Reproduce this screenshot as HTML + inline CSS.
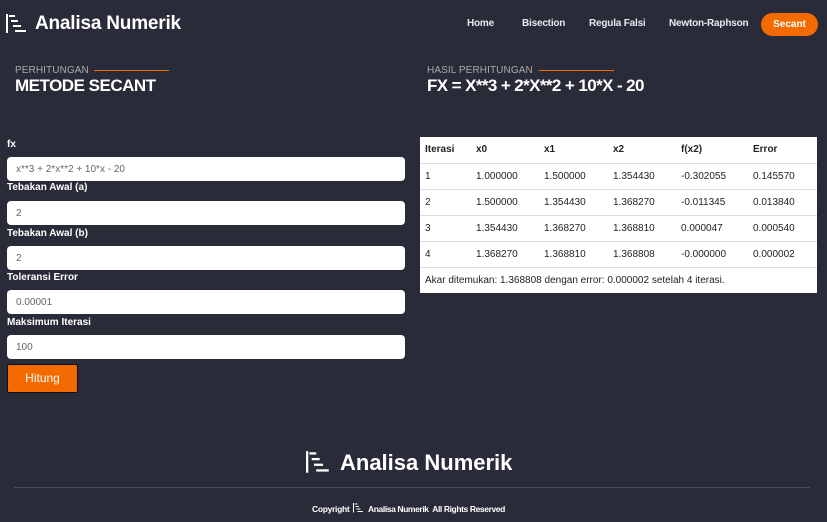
<!DOCTYPE html>
<html><head><meta charset="utf-8"><style>
*{margin:0;padding:0;box-sizing:border-box}
body{width:827px;height:522px;background:#2a2b38;font-family:"Liberation Sans",sans-serif;color:#fff;position:relative;overflow:hidden}
.a{position:absolute}
.brand{font-weight:bold;font-size:19px;letter-spacing:-0.2px}
.nav{font-size:10px;font-weight:bold;color:#e8e8ee;top:18px;letter-spacing:-0.2px}
.sec{left:761px;top:13px;width:57px;height:23px;border-radius:12px;background:#f26a00;color:#fff;font-size:10px;font-weight:bold;text-align:center;line-height:23px}
.small{font-size:10px;color:#aaa;letter-spacing:0.1px}
.line{height:1px;background:#f26a00}
.big{font-size:17px;font-weight:bold;letter-spacing:-0.5px}
.lbl{font-size:10px;font-weight:bold;left:7px}
.inp{left:7px;width:398px;height:24px;background:#fff;border-radius:4px;color:#666;font-size:10px;line-height:26px;padding-left:9px}
.btn{left:7px;top:364px;width:71px;height:29px;background:#f26a00;border:1px solid #111;border-radius:2px;font-size:12px;text-align:center;line-height:27px}
table{position:absolute;left:420px;top:137px;width:397px;background:#fff;border-collapse:collapse;color:#222;font-size:10px}
td{height:26px;border-bottom:1px solid #ddd;padding-left:5px}
th{height:26px;text-align:left;padding-left:5px;border-bottom:1px solid #ddd}
</style></head><body>
<svg class="a" style="left:6px;top:14px" width="22" height="20" viewBox="0 0 22 20"><g fill="#fff"><rect x="0" y="0" width="2" height="19"/><rect x="3" y="1" width="6" height="2"/><rect x="5" y="6" width="7" height="2"/><rect x="7" y="11" width="8" height="2"/><rect x="9" y="16" width="11" height="2"/></g></svg>
<div class="a brand" style="left:35px;top:13px">Analisa Numerik</div>
<div class="a nav" style="left:467px">Home</div>
<div class="a nav" style="left:522px">Bisection</div>
<div class="a nav" style="left:589px">Regula Falsi</div>
<div class="a nav" style="left:669px">Newton-Raphson</div>
<div class="a sec">Secant</div>
<div class="a small" style="left:15px;top:65px">PERHITUNGAN</div>
<div class="a line" style="left:94px;top:70px;width:75px"></div>
<div class="a big" style="left:15px;top:76px">METODE SECANT</div>
<div class="a small" style="left:427px;top:65px">HASIL PERHITUNGAN</div>
<div class="a line" style="left:539px;top:70px;width:75px"></div>
<div class="a big" style="left:427px;top:76px;letter-spacing:-0.6px">FX = X**3 + 2*X**2 + 10*X - 20</div>
<div class="a lbl" style="top:139px">fx</div>
<div class="a inp" style="top:157px">x**3 + 2*x**2 + 10*x - 20</div>
<div class="a lbl" style="top:182px">Tebakan Awal (a)</div>
<div class="a inp" style="top:201px">2</div>
<div class="a lbl" style="top:228px">Tebakan Awal (b)</div>
<div class="a inp" style="top:246px">2</div>
<div class="a lbl" style="top:272px">Toleransi Error</div>
<div class="a inp" style="top:290px">0.00001</div>
<div class="a lbl" style="top:317px">Maksimum Iterasi</div>
<div class="a inp" style="top:335px">100</div>
<div class="a btn">Hitung</div>
<table>
<tr><th style="width:51px">Iterasi</th><th style="width:68px">x0</th><th style="width:69px">x1</th><th style="width:68px">x2</th><th style="width:72px">f(x2)</th><th>Error</th></tr>
<tr><td>1</td><td>1.000000</td><td>1.500000</td><td>1.354430</td><td>-0.302055</td><td>0.145570</td></tr>
<tr><td>2</td><td>1.500000</td><td>1.354430</td><td>1.368270</td><td>-0.011345</td><td>0.013840</td></tr>
<tr><td>3</td><td>1.354430</td><td>1.368270</td><td>1.368810</td><td>0.000047</td><td>0.000540</td></tr>
<tr><td>4</td><td>1.368270</td><td>1.368810</td><td>1.368808</td><td>-0.000000</td><td>0.000002</td></tr>
<tr><td colspan="6" style="border:none">Akar ditemukan: 1.368808 dengan error: 0.000002 setelah 4 iterasi.</td></tr>
</table>
<svg class="a" style="left:306px;top:451px" width="25" height="23" viewBox="0 0 22 20"><g fill="#fff"><rect x="0" y="0" width="2" height="19"/><rect x="3" y="1" width="6" height="2"/><rect x="5" y="6" width="7" height="2"/><rect x="7" y="11" width="8" height="2"/><rect x="9" y="16" width="11" height="2"/></g></svg>
<div class="a brand" style="left:340px;top:450px;font-size:22px;letter-spacing:0">Analisa Numerik</div>
<div class="a" style="left:14px;top:487px;width:796px;height:1px;background:#4a4b58"></div>
<div class="a" style="left:312px;top:504px;font-size:8.5px;font-weight:bold;letter-spacing:-0.3px">Copyright</div>
<svg class="a" style="left:353px;top:503px" width="11" height="10" viewBox="0 0 22 20"><g fill="#fff"><rect x="0" y="0" width="2" height="19"/><rect x="3" y="1" width="6" height="2"/><rect x="5" y="6" width="7" height="2"/><rect x="7" y="11" width="8" height="2"/><rect x="9" y="16" width="11" height="2"/></g></svg>
<div class="a" style="left:368px;top:504px;font-size:8.5px;font-weight:bold;letter-spacing:-0.4px">Analisa Numerik&nbsp; All Rights Reserved</div>
</body></html>
